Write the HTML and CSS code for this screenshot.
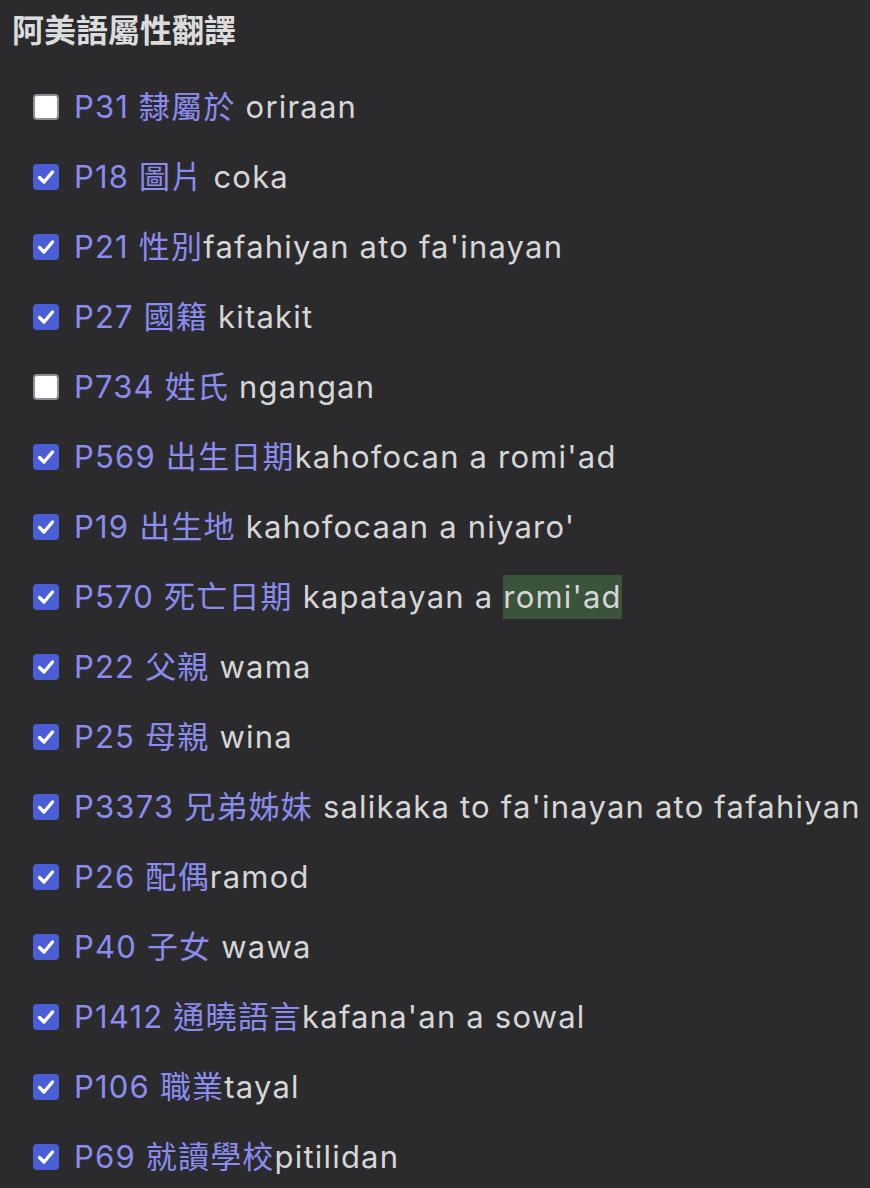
FILE: index.html
```html
<!DOCTYPE html>
<html lang="zh-Hant">
<head>
    <meta charset="UTF-8">
    <title>阿美語屬性翻譯</title>
    <link rel="stylesheet" href="styles.css">
</head>
<body>
    <div class="panel">
        <h3>阿美語屬性翻譯</h3>
        <ul class="prop-list">
            <li><label><input type="checkbox"><span class="pid">P31 隸屬於</span> oriraan</label></li>
            <li><label><input type="checkbox" checked><span class="pid">P18 圖片</span> coka</label></li>
            <li><label><input type="checkbox" checked><span class="pid">P21 性別</span>fafahiyan ato fa'inayan</label></li>
            <li><label><input type="checkbox" checked><span class="pid">P27 國籍</span> kitakit</label></li>
            <li><label><input type="checkbox"><span class="pid">P734 姓氏</span> ngangan</label></li>
            <li><label><input type="checkbox" checked><span class="pid">P569 出生日期</span>kahofocan a romi'ad</label></li>
            <li><label><input type="checkbox" checked><span class="pid">P19 出生地</span> kahofocaan a niyaro'</label></li>
            <li><label><input type="checkbox" checked><span class="pid">P570 死亡日期</span> kapatayan a <mark>romi'ad</mark></label></li>
            <li><label><input type="checkbox" checked><span class="pid">P22 父親</span> wama</label></li>
            <li><label><input type="checkbox" checked><span class="pid">P25 母親</span> wina</label></li>
            <li><label><input type="checkbox" checked><span class="pid">P3373 兄弟姊妹</span> salikaka to fa'inayan ato fafahiyan</label></li>
            <li><label><input type="checkbox" checked><span class="pid">P26 配偶</span>ramod</label></li>
            <li><label><input type="checkbox" checked><span class="pid">P40 子女</span> wawa</label></li>
            <li><label><input type="checkbox" checked><span class="pid">P1412 通曉語言</span>kafana'an a sowal</label></li>
            <li><label><input type="checkbox" checked><span class="pid">P106 職業</span>tayal</label></li>
            <li><label><input type="checkbox" checked><span class="pid">P69 就讀學校</span>pitilidan</label></li>
        </ul>
    </div>
</body>
</html>
```

FILE: styles.css
```css
html, body {
    margin: 0;
    background: #2b2b2d;
}
body {
    font-family: Inter, "Noto Sans CJK TC", sans-serif;
    color: #d6d6d6;
    overflow: hidden;
}
.panel {
    padding: 7px 12px;
}
h3 {
    margin: 0;
    font-size: 32px;
    line-height: 42px;
    font-weight: 700;
    color: #dcdcdc;
    font-family: "Noto Sans CJK TC", sans-serif;
}
.prop-list {
    list-style: none;
    margin: 23px 0 0;
    padding: 0 0 0 21px;
}
.prop-list li {
    height: 70px;
    display: flex;
    align-items: center;
}
.prop-list label {
    display: flex;
    align-items: center;
    font-size: 31px;
    letter-spacing: 1.2px;
    line-height: 44px;
    white-space: pre;
    cursor: pointer;
}
.pid {
    color: #8b8cf0;
}
input[type="checkbox"] {
    appearance: none;
    -webkit-appearance: none;
    width: 26px;
    height: 26px;
    margin: 0 15px 0 0;
    border: 2px solid #8e8e98;
    border-radius: 4px;
    background: #fff;
    box-sizing: border-box;
    flex-shrink: 0;
    cursor: pointer;
}
input[type="checkbox"]:checked {
    border-color: #4a5fd6;
    background: #4a5fd6 url("data:image/svg+xml,%3Csvg xmlns='http://www.w3.org/2000/svg' viewBox='0 0 26 26'%3E%3Cpath d='M6.5 13.5l4.5 4.5 8.5-10' fill='none' stroke='white' stroke-width='3.4' stroke-linecap='round' stroke-linejoin='round'/%3E%3C/svg%3E") center/26px 26px no-repeat;
}
mark {
    background: #3b523b;
    color: inherit;
}
```
